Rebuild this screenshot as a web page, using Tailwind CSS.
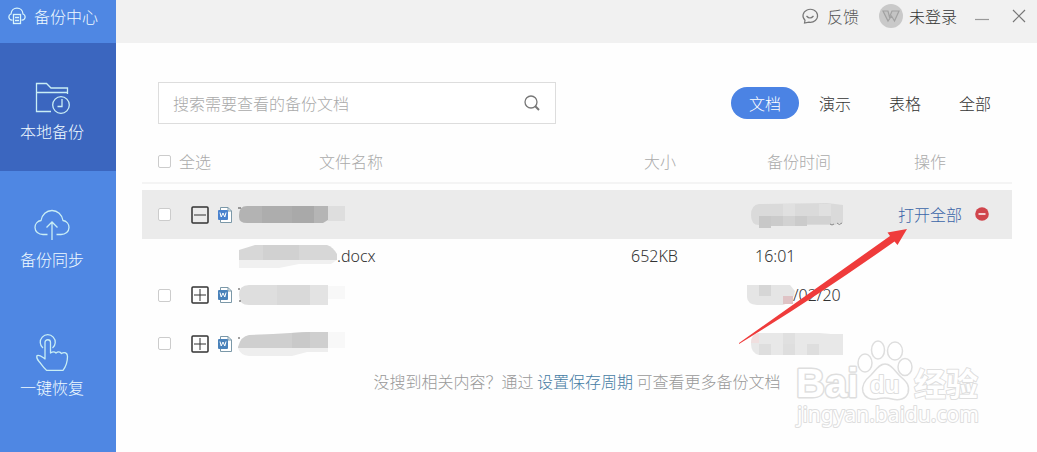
<!DOCTYPE html>
<html lang="zh-CN">
<head>
  <meta charset="UTF-8" />
  <meta name="viewport" content="width=device-width, initial-scale=1" />
  <title>备份中心</title>
  <script src="https://cdn.jsdelivr.net/npm/@tailwindcss/browser@4"></script>
</head>
<body class="flex min-h-screen bg-[#fefefe] font-['Noto_Sans_CJK_SC',sans-serif] text-base font-light text-[#333]">

  <!-- sidebar -->
  <aside class="w-[116px] shrink-0 bg-[#4f87e3] text-[#f0fbff]">
    <h1 class="flex h-[43px] items-center gap-2 pb-3 pl-2">
      <svg class="size-[18px] shrink-0" viewBox="0 0 18 18" fill="none" stroke="#d8f4fb" stroke-width="1.3">
        <path d="M4.5 13.2H4A3.2 3.2 0 0 1 3 7C3.2 3.5 5.8 1.2 9 1.2S14.8 3.5 15 7A3.2 3.2 0 0 1 14 13.2H13.5" />
        <rect x="5.5" y="7.5" width="7" height="9" />
        <path d="M7 10.5H11M7 13.5H11" />
      </svg>
      <span class="whitespace-nowrap">备份中心</span>
    </h1>
    <nav>
      <a href="#local" class="flex h-32 flex-col items-center bg-[#3b66bf] pt-[38px] pr-3">
        <svg class="h-[34px] w-9" viewBox="0 0 36 34" fill="none" stroke="#c9eef5" stroke-width="1.3">
          <path d="M17 30.5H2.5V2.5H12.5L17 7H33.500V13M2.5 11.5H33.5" />
          <circle cx="27" cy="24" r="8.3" />
          <path d="M28 18V25.5H23.5" />
        </svg>
        <span class="mt-1">本地备份</span>
      </a>
      <a href="#sync" class="flex h-32 flex-col items-center pt-[38px] pr-3">
        <svg class="h-[34px] w-9" viewBox="0 0 36 34" fill="none" stroke="#c9eef5" stroke-width="1.3">
          <path d="M13.5 25.5H9C4.5 25.5 1 22.5 1 18.5C1 15 3.5 12 7 11.5C8 5.5 12.5 1.5 18 1.5S28 5.5 29 11.5C32.5 12 35 15 35 18.5C35 22.5 31.5 25.5 27 25.5H22.5" />
          <path d="M18 31V13M12.5 18.5L18 13L23.5 18.5" />
        </svg>
        <span class="mt-1">备份同步</span>
      </a>
      <a href="#restore" class="flex h-32 flex-col items-center pt-[34px] pr-3">
        <svg class="h-[38px] w-9" viewBox="0 0 36 38" fill="none" stroke="#c9eef5" stroke-width="1.3" stroke-linejoin="round">
          <path d="M9 15A7.5 7.5 0 1 1 18.5 15" />
          <path d="M11 26V9.5A2.7 2.7 0 0 1 16.5 9.5V20C19 18.3 20.5 18.5 22 20C24 18.3 26 18.5 27.5 20.5C30.5 18.5 33.5 20 33.5 23.5C33.5 30 31.5 34 29 37.3H12.5C8.5 34 7.5 31 5 28.5C3 26.5 2.5 24 3 22.5C6 21.5 8 24 11 26Z" />
        </svg>
        <span class="mt-1">一键恢复</span>
      </a>
    </nav>
  </aside>

  <div class="relative min-w-0 flex-1">
    <!-- window bar -->
    <header class="flex h-[43px] items-start justify-end bg-[#f1f1f1] pt-1 pr-[10px]">
      <button type="button" class="flex h-6 items-center gap-2 text-[#555]">
        <svg class="size-[18px]" viewBox="0 0 18 18" fill="none" stroke="#777" stroke-width="1.2">
          <path d="M3.5 16L4 13.3A7.3 6.5 0 1 1 8 15.2Z" />
          <path d="M5.5 9Q9 13 12.5 9" />
        </svg>
        反馈
      </button>
      <button type="button" class="ml-5 flex h-6 items-center gap-[6px] text-[#333]">
        <svg class="size-6" viewBox="0 0 24 24">
          <circle cx="12" cy="12" r="12" fill="#c9c9c9" />
          <path d="M4 7H9L10.5 13L13 7H20L15.5 17L12.5 12L9 17Z" fill="#c4c4c4" stroke="#a2a2a2" stroke-width="1.2" />
        </svg>
        未登录
      </button>
      <button type="button" aria-label="最小化" class="ml-4 flex h-6 items-center">
        <svg class="size-[18px]" viewBox="0 0 18 18" stroke="#999" stroke-width="1.2"><path d="M2 12.5H16" /></svg>
      </button>
      <button type="button" aria-label="关闭" class="ml-5 flex h-6 items-center">
        <svg class="size-4" viewBox="0 0 16 16" stroke="#777" stroke-width="1.2"><path d="M2 2L14 14M14 2L2 14" /></svg>
      </button>
    </header>

    <main class="pr-[25px] pl-[26px]">
      <!-- search and filters -->
      <div class="flex items-center justify-between pt-[39px] pr-[3px] pl-4">
        <form class="flex h-[42px] w-[398px] items-center border border-[#ddd] bg-white px-[14px]">
          <input type="text" aria-label="搜索" placeholder="搜索需要查看的备份文档" class="min-w-0 flex-1 outline-none placeholder:text-[#aaa]" />
          <button type="button" aria-label="搜索">
            <svg class="size-[18px]" viewBox="0 0 18 18" fill="none" stroke="#777">
              <circle cx="8" cy="8" r="6" stroke-width="1.3" />
              <path d="M12.3 12.3L16 16" stroke-width="2" />
            </svg>
          </button>
        </form>
        <div class="flex h-8 gap-[2px]">
          <button type="button" class="w-[68px] rounded-full bg-[#4b83e4] text-white">文档</button>
          <button type="button" class="w-[68px]">演示</button>
          <button type="button" class="w-[68px]">表格</button>
          <button type="button" class="w-[68px]">全部</button>
        </div>
      </div>

      <!-- backup files -->
      <table class="mt-[19px] w-full table-fixed text-left font-['Noto_Sans','Noto_Sans_CJK_SC',sans-serif]">
        <colgroup>
          <col class="w-[49px]" />
          <col />
          <col class="w-[120px]" />
          <col class="w-[147px]" />
          <col class="w-[114px]" />
        </colgroup>
        <thead class="text-[#aaa]">
          <tr class="h-10 border-b-2 border-[#f4f4f4]">
            <th class="pb-[2px] pl-4 font-light">
              <label class="flex items-center gap-2 whitespace-nowrap">
                <input type="checkbox" class="size-[13px] shrink-0 appearance-none rounded-xs border border-[#ccc] bg-white" />
                全选
              </label>
            </th>
            <th class="pb-[2px] pl-32 font-light">文件名称</th>
            <th class="pb-[2px] pl-[13px] font-light">大小</th>
            <th class="pb-[2px] pl-4 font-light">备份时间</th>
            <th class="pb-[2px] pl-4 font-light">操作</th>
          </tr>
        </thead>
        <tbody>
          <tr class="h-[7px]" aria-hidden="true"><td colspan="5"></td></tr>
          <tr class="h-[49px] bg-[#ebebeb]">
            <td class="pl-4"><input type="checkbox" aria-label="选择第一组" class="block size-[13px] appearance-none rounded-xs border border-[#ccc] bg-white" /></td>
            <td>
              <div class="flex items-center">
                <button type="button" aria-label="收起">
                  <svg class="size-[18px]" viewBox="0 0 18 18" fill="none" stroke="#333"><rect x="1" y="1" width="16" height="16" rx="1" stroke-width="1.5" /><path d="M3 9H15" /></svg>
                </button>
                <svg class="ml-2 h-[18px] w-4" viewBox="0 0 16 18" fill="none"><path d="M3.500 1.500H11L14.5 5V16.5H3.5Z" fill="#fff" stroke="#7b98a8" /><path d="M11 1.5V5H14.5" stroke="#7b98a8" /><rect x="1" y="4" width="10" height="10" rx="1" fill="#4a82ce" /><path d="M3 6.5L4.2 11L6 7L7.8 11L9 6.5" stroke="#fff" /></svg>
                <svg class="ml-1 h-5 w-28" viewBox="0 0 112 20"><path d="M2 10Q2 1 10 1H25V18H10Q2 18 2 12Z" fill="#b3b3b3" /><path d="M25 1H55V18H25Z" fill="#adadad" /><path d="M55 1H77V18H55Z" fill="#a9a9a9" /><path d="M77 1H91V15L86 18H77Z" fill="#b5b5b5" /><path d="M91 1H108V16H91Z" fill="#dedede" /><path d="M1 3H4" stroke="#444" /></svg>
              </div>
            </td>
            <td></td>
            <td>
              <svg class="h-7 w-[94px]" viewBox="0 0 94 28"><path d="M0 14Q0 4 8 3L76 2L92 4V22H88L84 24H8Q0 24 0 14Z" fill="#dadada" /><path d="M8 15H20V27H8Z" fill="#c8c8c8" /><path d="M20 15H32V25H20Z M44 15H56V25H44Z" fill="#cbcbcb" /><path d="M32 15H44V25H32Z M56 15H80V23H56Z" fill="#d2d2d2" /><path d="M32 3H44V15H32Z M68 3H80V15H68Z" fill="#e0e0e0" /><path d="M79 23Q81 25 83 23M86 22Q88 25 91 22" fill="none" stroke="#888" /></svg>
            </td>
            <td>
              <div class="flex items-center gap-3">
                <a href="#open" class="whitespace-nowrap text-[#3b65a8]">打开全部</a>
                <button type="button" aria-label="删除">
                  <svg class="size-4" viewBox="0 0 16 16"><circle cx="8" cy="7" r="6.8" fill="#d0454c" /><path d="M4.5 7H11.5" stroke="#fff" stroke-width="1.5" /></svg>
                </button>
              </div>
            </td>
          </tr>
          <tr class="h-[33px]">
            <td></td>
            <td>
              <div class="flex items-center pl-12">
                <svg class="h-6 w-[98px] shrink-0" viewBox="0 0 98 24"><path d="M0 6L16 1H88Q94 3 98 10V16H0Z" fill="#d7d7d7" /><path d="M24 1H60V16H24Z" fill="#d1d1d1" /><path d="M0 16H98L92 20H60L40 24H0Z" fill="#f0f0f0" /></svg>
                .docx
              </div>
            </td>
            <td>652KB</td>
            <td class="pl-1">16:01</td>
            <td></td>
          </tr>
          <tr class="h-[46px]">
            <td class="pl-4"><input type="checkbox" aria-label="选择第二组" class="block size-[13px] appearance-none rounded-xs border border-[#ccc] bg-white" /></td>
            <td>
              <div class="flex items-center">
                <button type="button" aria-label="展开">
                  <svg class="size-[18px]" viewBox="0 0 18 18" fill="none" stroke="#333"><rect x="1" y="1" width="16" height="16" rx="1" stroke-width="1.5" /><path d="M3 9H15M9 3V15" /></svg>
                </button>
                <svg class="ml-2 h-[18px] w-4" viewBox="0 0 16 18" fill="none"><path d="M3.5 1.5H11L14.5 5V16.5H3.5Z" fill="#fff" stroke="#7b98a8" /><path d="M11 1.5V5H14.5" stroke="#7b98a8" /><rect x="1" y="4" width="10" height="10" rx="1" fill="#4a82ba" /><path d="M3 6.5L4.2 11L6 7L7.8 11L9 6.5" stroke="#fff" /></svg>
                <svg class="ml-1 h-5 w-28" viewBox="0 0 112 20"><path d="M2 10Q2 0 12 0H91V20H12Q2 20 2 10Z" fill="#dedede" /><path d="M40 0H73V20H40Z" fill="#d9d9d9" /><path d="M73 0H91V20H73Z" fill="#e3e3e3" /><path d="M91 1H108V14H91Z" fill="#f8f8f8" /><path d="M1 4H3M2 16H4" stroke="#444" /></svg>
              </div>
            </td>
            <td></td>
            <td>
              <div class="flex items-center">
                <svg class="h-6 w-[42px] shrink-0 overflow-visible" viewBox="0 0 42 24"><path d="M-4 2H39L44 8Q43 20 32 22H6Q-4 21 -4 14Z" fill="#e5e5e5" /><path d="M8 2H20V13H8Z" fill="#d6d6d6" /><path d="M32 13H42V21H32Z" fill="#dfc3c5" /></svg>
                <span>/02/20</span>
              </div>
            </td>
            <td></td>
          </tr>
          <tr class="h-[51px]">
            <td class="pl-4"><input type="checkbox" aria-label="选择第三组" class="block size-[13px] appearance-none rounded-xs border border-[#ccc] bg-white" /></td>
            <td>
              <div class="flex items-center">
                <button type="button" aria-label="展开">
                  <svg class="size-[18px]" viewBox="0 0 18 18" fill="none" stroke="#333"><rect x="1" y="1" width="16" height="16" rx="1" stroke-width="1.5" /><path d="M3 9H15M9 3V15" /></svg>
                </button>
                <svg class="ml-2 h-[18px] w-4" viewBox="0 0 16 18" fill="none"><path d="M3.5 1.5H11L14.5 5V16.5H3.5Z" fill="#fff" stroke="#7b98a8" /><path d="M11 1.5V5H14.5" stroke="#7b98a8" /><rect x="1" y="4" width="10" height="10" rx="1" fill="#4a82ba" /><path d="M3 6.5L4.2 11L6 7L7.8 11L9 6.5" stroke="#fff" /></svg>
                <svg class="ml-1 h-6 w-28" viewBox="0 0 112 24"><path d="M1 15Q4 4 12 3L36 2L70 0H91V16H1Z" fill="#cfcfcf" /><path d="M55 1L73 0V16H55Z" fill="#c9c9c9" /><path d="M1 16H91V20H70L55 24H12Q3 23 1 16Z" fill="#eee" /><path d="M91 0H108V16H91Z" fill="#f8f8f8" /><path d="M1 6H3" stroke="#444" /></svg>
              </div>
            </td>
            <td></td>
            <td>
              <svg class="h-6 w-[94px]" viewBox="0 0 94 24"><path d="M0 12Q0 2 8 1H68L80 2H92V23H8Q0 21 0 12Z" fill="#e8e8e8" /><path d="M0 11Q0 2 8 1V11Z" fill="#f0dfdf" /><path d="M8 12H20V23H8Z M32 12H44V23H32Z M56 12H68V23H56Z" fill="#dedede" /><path d="M32 1H44V12H32Z" fill="#e0e0e0" /></svg>
            </td>
            <td></td>
          </tr>
        </tbody>
      </table>

      <p class="text-center text-[#999]">没搜到相关内容？通过 <a href="#cycle" class="text-[#457ba3]">设置保存周期</a> 可查看更多备份文档</p>
    </main>

    <!-- pointer arrow -->
    <svg class="pointer-events-none absolute top-[226px] right-[124px] h-[124px] w-[180px]" viewBox="0 0 180 124">
      <path d="M6 117L157 10L154.5 6.5L174 3L164.5 19L161.5 15.5Q80 73 6 118Z" fill="#ef3b3b" />
    </svg>

    <!-- watermark -->
    <svg class="pointer-events-none absolute top-[336px] right-[51px] h-[98px] w-[194px]" viewBox="0 0 194 98" fill="#fff" stroke="#dedede" stroke-width="1.5" stroke-linejoin="round">
      <ellipse cx="73" cy="27" rx="7" ry="9" />
      <ellipse cx="86" cy="14" rx="6.5" ry="9" />
      <ellipse cx="103" cy="15" rx="7.5" ry="9" />
      <ellipse cx="113" cy="31" rx="7" ry="8.5" />
      <path d="M93 28C87 28 84 34 79 39C73 44 69 49 71 56C73 62 79 64 85 63Q93 61 100 63C107 65 114 63 116 57C118 50 115 46 109 41C103 36 100 28 93 28Z" />
      <g font-family="Liberation Sans, sans-serif" font-weight="700" stroke-width="3" paint-order="stroke">
        <text x="4" y="61" font-size="40">Bai</text>
        <text x="78" y="57" font-size="24" stroke-width="2">du</text>
        <text x="122" y="60" font-size="32" stroke-width="2" font-family="Noto Sans CJK SC, sans-serif">经验</text>
      </g>
      <text x="5" y="86" font-size="21" font-weight="400" stroke-width="2" paint-order="stroke" font-family="Noto Sans, sans-serif">jingyan.baidu.com</text>
    </svg>
  </div>

</body>
</html>
